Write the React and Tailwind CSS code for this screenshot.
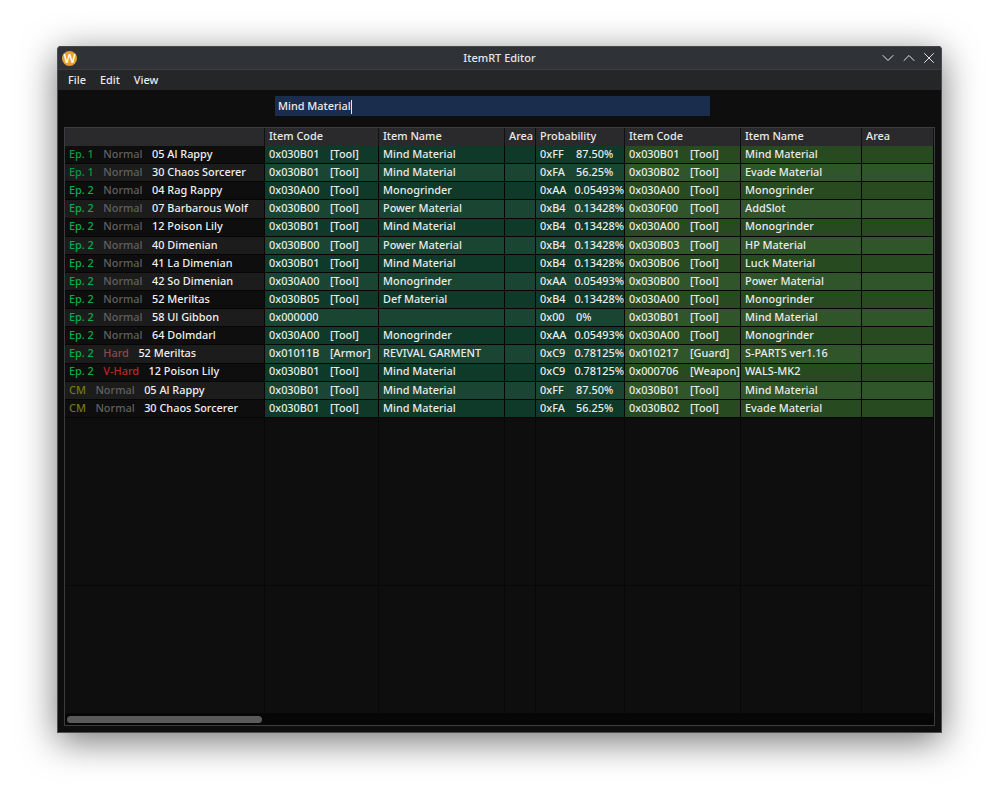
// ItemRT Editor window: search box over a drop table, dark Breeze-like theme.
import { ChevronDown, ChevronUp, X } from "lucide-react";

const COLS = "grid grid-cols-[200px_114px_126px_31px_89px_116px_121px_72px]";

const rows = [
  ["Ep. 1", "Normal", "05 Al Rappy", "0x030B01", "[Tool]", "Mind Material", "0xFF", "87.50%", "0x030B01", "[Tool]", "Mind Material"],
  ["Ep. 1", "Normal", "30 Chaos Sorcerer", "0x030B01", "[Tool]", "Mind Material", "0xFA", "56.25%", "0x030B02", "[Tool]", "Evade Material"],
  ["Ep. 2", "Normal", "04 Rag Rappy", "0x030A00", "[Tool]", "Monogrinder", "0xAA", "0.05493%", "0x030A00", "[Tool]", "Monogrinder"],
  ["Ep. 2", "Normal", "07 Barbarous Wolf", "0x030B00", "[Tool]", "Power Material", "0xB4", "0.13428%", "0x030F00", "[Tool]", "AddSlot"],
  ["Ep. 2", "Normal", "12 Poison Lily", "0x030B01", "[Tool]", "Mind Material", "0xB4", "0.13428%", "0x030A00", "[Tool]", "Monogrinder"],
  ["Ep. 2", "Normal", "40 Dimenian", "0x030B00", "[Tool]", "Power Material", "0xB4", "0.13428%", "0x030B03", "[Tool]", "HP Material"],
  ["Ep. 2", "Normal", "41 La Dimenian", "0x030B01", "[Tool]", "Mind Material", "0xB4", "0.13428%", "0x030B06", "[Tool]", "Luck Material"],
  ["Ep. 2", "Normal", "42 So Dimenian", "0x030A00", "[Tool]", "Monogrinder", "0xAA", "0.05493%", "0x030B00", "[Tool]", "Power Material"],
  ["Ep. 2", "Normal", "52 Meriltas", "0x030B05", "[Tool]", "Def Material", "0xB4", "0.13428%", "0x030A00", "[Tool]", "Monogrinder"],
  ["Ep. 2", "Normal", "58 Ul Gibbon", "0x000000", "", "", "0x00", "0%", "0x030B01", "[Tool]", "Mind Material"],
  ["Ep. 2", "Normal", "64 Dolmdarl", "0x030A00", "[Tool]", "Monogrinder", "0xAA", "0.05493%", "0x030A00", "[Tool]", "Monogrinder"],
  ["Ep. 2", "Hard", "52 Meriltas", "0x01011B", "[Armor]", "REVIVAL GARMENT", "0xC9", "0.78125%", "0x010217", "[Guard]", "S-PARTS ver1.16"],
  ["Ep. 2", "V-Hard", "12 Poison Lily", "0x030B01", "[Tool]", "Mind Material", "0xC9", "0.78125%", "0x000706", "[Weapon]", "WALS-MK2"],
  ["CM", "Normal", "05 Al Rappy", "0x030B01", "[Tool]", "Mind Material", "0xFF", "87.50%", "0x030B01", "[Tool]", "Mind Material"],
  ["CM", "Normal", "30 Chaos Sorcerer", "0x030B01", "[Tool]", "Mind Material", "0xFA", "56.25%", "0x030B02", "[Tool]", "Evade Material"],
];

const epColor = { "Ep. 1": "text-[#0a9a44]", "Ep. 2": "text-[#08ad4c]", CM: "text-[#77771a]" };
const diffColor = { Normal: "text-[#606060]", Hard: "text-[#8f4a4a]", "V-Hard": "text-[#b82a2a]" };

function Cell({ className = "", children }) {
  return (
    <div className={`flex items-center pl-[4px] pb-[1px] whitespace-nowrap overflow-hidden border-r border-b border-[#050505] ${className}`}>
      {children}
    </div>
  );
}

function Row({ r, i }) {
  const odd = i % 2 === 1;
  const left = odd ? "bg-[#1c1c1c]" : "bg-[#0e0e0e]";
  const green = odd ? "bg-[#1b4533]" : "bg-[#0f3a29]";
  const lime = odd ? "bg-[#31552a]" : "bg-[#274a20]";
  return (
    <div className={`${COLS} h-[18.14px]`}>
      <Cell className={`${left} gap-[9.5px]`}>
        <span className={epColor[r[0]]}>{r[0]}</span>
        <span className={diffColor[r[1]]}>{r[1]}</span>
        <span className="text-[#f0f0f0]">{r[2]}</span>
      </Cell>
      <Cell className={green}>
        <span className="w-[61px]">{r[3]}</span>
        <span>{r[4]}</span>
      </Cell>
      <Cell className={green}>{r[5]}</Cell>
      <Cell className={green} />
      <Cell className={green}>
        <span className="w-[36px]">{r[6]}</span>
        <span>{r[7]}</span>
      </Cell>
      <Cell className={lime}>
        <span className="w-[61px]">{r[8]}</span>
        <span>{r[9]}</span>
      </Cell>
      <Cell className={lime}>{r[10]}</Cell>
      <Cell className={lime} />
    </div>
  );
}

function EmptyRow({ className }) {
  return (
    <div className={`${COLS} ${className}`}>
      {[0, 1, 2, 3, 4, 5, 6, 7].map(n => (
        <div key={n} className="bg-[#0e0e0e] border-r border-b border-[#070707]" />
      ))}
    </div>
  );
}

export default function App() {
  return (
    <div className="w-[999px] h-[800px] bg-white pt-[46px] pl-[57px] overflow-hidden font-['Noto_Sans',sans-serif] font-medium text-[10.9px] text-[#ebebeb]">
      <div className="w-[885px] h-[687px] flex flex-col rounded-t-[4px] bg-[#0e0e0e] border border-[#4b4d50] border-t-0 shadow-[0_8px_36px_rgba(0,0,0,0.55)]">
        <header className="relative h-[24px] flex items-center justify-between pl-[4px] pr-[3px] bg-[#2f3338] rounded-t-[4px] border-t border-[#44474b] border-b border-b-[#3a3d41]">
          <div className="w-[15px] h-[15px] rounded-full bg-[#e8a02c] flex items-center justify-center text-[13px] leading-none text-white">W</div>
          <div className="absolute inset-0 flex items-center justify-center text-[11px] text-[#e6e6e6]">ItemRT Editor</div>
          <div className="flex items-center gap-[1px] text-[#e6e6e6]">
            <ChevronDown size={20} strokeWidth={1.2} />
            <ChevronUp size={20} strokeWidth={1.2} />
            <X size={18} strokeWidth={1.3} />
          </div>
        </header>
        <nav className="h-[20px] flex items-center gap-[14px] pl-[10px] bg-[#242628]">
          <span>File</span>
          <span>Edit</span>
          <span>View</span>
        </nav>
        <div className="h-[37px] flex items-start pl-[217px] pt-[6px]">
          <div className="w-[435px] h-[20px] bg-[#1b2d4d] flex items-center pl-[3px] pt-[1px] text-[#ebebeb]">
            <span>Mind Material</span>
            <span className="w-px h-[14px] bg-[#e8e8e8]" />
          </div>
        </div>
        <div className="mx-[6px] h-[599px] flex flex-col border border-[#3c3c40] bg-[#060606]">
          <div className={`${COLS} h-[18px] bg-[#2a2a2c]`}>
            {["", "Item Code", "Item Name", "Area", "Probability", "Item Code", "Item Name", "Area"].map((h, n) => (
              <div key={n} className="flex items-center pl-[4px] pb-[1px] overflow-hidden whitespace-nowrap border-r border-[#111]">{h}</div>
            ))}
          </div>
          {rows.map((r, i) => <Row key={i} r={r} i={i} />)}
          <EmptyRow className="h-[168px]" />
          <EmptyRow className="h-[128px]" />
          <div className="flex-1 flex items-center pl-[2px]">
            <div className="w-[195px] h-[7px] rounded-full bg-[#5a5a5a]" />
          </div>
        </div>
      </div>
    </div>
  );
}
